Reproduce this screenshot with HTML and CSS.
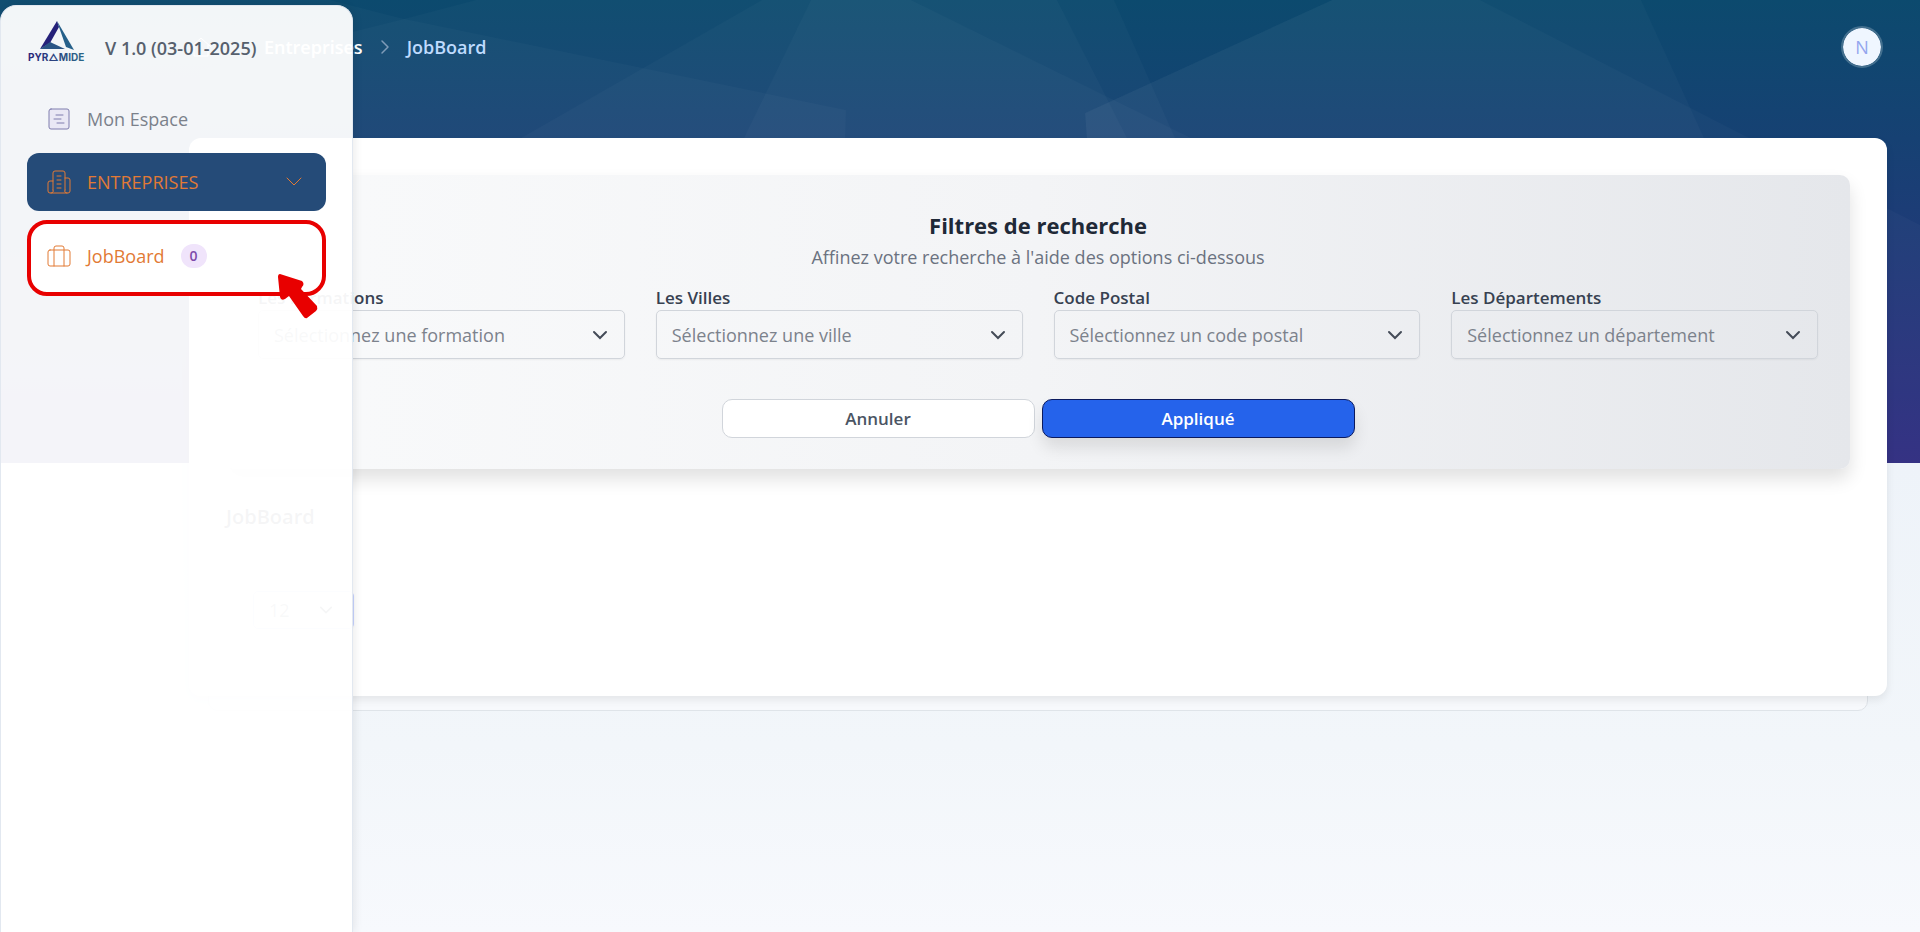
FILE: index.html
```html
<!DOCTYPE html>
<html lang="fr">
<head>
    <meta charset="UTF-8">
    <meta name="viewport" content="width=device-width, initial-scale=1.0">
    <title>Pyramide - JobBoard</title>
    <link rel="stylesheet" href="styles.css">
</head>
<body>
    <svg class="backdrop" viewBox="0 0 1920 463" preserveAspectRatio="none" aria-hidden="true">
        <defs>
            <linearGradient id="sky" x1="0" y1="0" x2="0" y2="1">
                <stop offset="0" stop-color="#0c4a6e"/>
                <stop offset=".3" stop-color="#164173"/>
                <stop offset="1" stop-color="#312e81"/>
            </linearGradient>
        </defs>
        <rect width="1920" height="463" fill="url(#sky)"/>
        <g fill="#fff" fill-opacity=".025">
            <path d="M0 0H330L400 18L846 110L836 463H0Z"/>
            <path d="M762 0L521 138L300 463H1700L1191 138L911 0Z"/>
            <path d="M811 0L744 138L700 463H1300L1127 138L1057 0Z"/>
            <path d="M476 0L400 20L200 70V463H1300L1175 138L1114 0Z"/>
            <path d="M1332 0L1085 113L1110 463H1850L1704 138L1641 0Z"/>
            <path d="M1332 0L1085 113L1110 463H1920V225L1755 141L1480 0Z"/>
        </g>
    </svg>

    <div class="page">
        <header class="topbar">
            <nav class="breadcrumb" aria-label="Fil d'Ariane">
                <a class="home" href="#" aria-label="Accueil">
                    <svg viewBox="0 0 24 24"><path d="m2 12 10-9 10 9M5 10v11h14V10"/></svg>
                </a>
                <a class="crumb" href="#">Entreprises</a>
                <svg class="crumb-sep" viewBox="0 0 24 24"><path d="m8 4 8 8-8 8"/></svg>
                <a class="crumb current" href="#">JobBoard</a>
            </nav>
            <button class="avatar">N</button>
        </header>

        <div class="stack">
            <main class="card">
                <form class="filters">
                    <h2>Filtres de recherche</h2>
                    <p>Affinez votre recherche à l'aide des options ci-dessous</p>
                    <div class="fields">
                        <div class="field">
                            <label for="formation">Les Formations</label>
                            <select id="formation"><option>Sélectionnez une formation</option></select>
                        </div>
                        <div class="field">
                            <label for="ville">Les Villes</label>
                            <select id="ville"><option>Sélectionnez une ville</option></select>
                        </div>
                        <div class="field">
                            <label for="postal">Code Postal</label>
                            <select id="postal"><option>Sélectionnez un code postal</option></select>
                        </div>
                        <div class="field">
                            <label for="departement">Les Départements</label>
                            <select id="departement"><option>Sélectionnez un département</option></select>
                        </div>
                    </div>
                    <div class="actions">
                        <button class="btn" type="reset">Annuler</button>
                        <button class="btn primary" type="button">Appliqué</button>
                    </div>
                </form>
                <h3>JobBoard</h3>
                <select class="page-size" aria-label="Résultats par page"><option>12</option></select>
            </main>
        </div>
    </div>

    <aside class="sidebar">
        <div class="brand">
            <svg class="logo" viewBox="0 0 60 44" role="img" aria-label="Pyramide">
                <defs>
                    <linearGradient id="brand" x1="0" y1="0" x2="1" y2="0">
                        <stop offset="0" stop-color="#2a2478"/>
                        <stop offset="1" stop-color="#2b6788"/>
                    </linearGradient>
                </defs>
                <path fill="#25217a" d="M30 1L13 29L23 23L32 7Z"/>
                <path fill="#2a5585" d="M13 29L23 22L38 29Z"/>
                <path fill="#25608a" d="M30 1L47 30L39 27L32 7Z"/>
                <text x="1" y="41" fill="url(#brand)">PYR△MIDE</text>
            </svg>
            <span class="version">V 1.0 (03-01-2025)</span>
        </div>
        <nav class="menu">
            <a class="item" href="#">
                <svg class="icon violet" viewBox="0 0 24 24"><rect x="2" y="2" width="20" height="20" rx="2"/><path d="M9 8h7M7 12h7M10 16h7"/></svg>
                Mon Espace
            </a>
            <button class="item group" aria-expanded="true">
                <svg class="icon" viewBox="0 0 24 24"><path d="M6 20V3a2 2 0 0 1 2-2h8a2 2 0 0 1 2 2v17M6 11H3a2 2 0 0 0-2 2v8a2 2 0 0 0 2 2h18a2 2 0 0 0 2-2V10a2 2 0 0 0-2-2h-3M10 6h4M10 10h4M10 14h4M10 18h4M6 20a2 2 0 0 1-2 3M18 20a2 2 0 0 0 2 3"/></svg>
                ENTREPRISES
                <svg class="chevron" viewBox="0 0 16 16"><path d="m1 4 7 7 7-7"/></svg>
            </button>
            <a class="item active" href="#">
                <svg class="icon" viewBox="0 0 24 24"><rect x="1" y="6" width="22" height="16" rx="2"/><path d="M7 22V4a2 2 0 0 1 2-2h6a2 2 0 0 1 2 2v18"/></svg>
                JobBoard
                <span class="count">0</span>
                <svg class="pointer" viewBox="0 0 44 48" aria-hidden="true"><path d="M4 2L26 9Q29 12 26 15L25 17L41 34Q42 37 40 39L31 46Q29 47 27 44L13 24L9 27Q5 29 4 25L2 5Q2 2 4 2Z"/></svg>
            </a>
        </nav>
    </aside>
</body>
</html>
```
FILE: styles.css
```css
:root {
    --navy: #254b78;
    --orange: #e27a35;
    --red: #e80000;
    --text: #374151;
    --border: #d1d5db;
}

* {
    box-sizing: border-box;
}

body {
    margin: 0;
    min-height: 100vh;
    font-family: "Open Sans", "Noto Sans", sans-serif;
    font-size: 18px;
    line-height: 24px;
    color: var(--text);
    background: linear-gradient(#eef3f9 50%, #f2f6fa 80%, #f7f9fd);
    overflow-x: hidden;
}

button,
select {
    font: inherit;
}

a {
    color: inherit;
    text-decoration: none;
}

svg {
    fill: none;
    stroke: currentColor;
    stroke-linecap: round;
    stroke-linejoin: round;
}

.backdrop {
    position: absolute;
    top: 0;
    left: 0;
    width: 100%;
    height: 463px;
    stroke: none;
}

.page {
    position: relative;
    padding: 0 33px 32px 189px;
}

.topbar {
    display: flex;
    justify-content: space-between;
    align-items: center;
    height: 93px;
    margin-bottom: 45px;
    padding-right: 4px;
}

.breadcrumb {
    display: flex;
    align-items: center;
    gap: 13px;
    font-weight: 600;
    color: #fff;
}

.home {
    display: flex;
    width: 62px;
}

.home svg {
    width: 24px;
    height: 24px;
}

.crumb-sep {
    width: 18px;
    height: 18px;
    color: #7f9bb8;
    stroke-width: 2;
}

.current {
    color: #bfdbfe;
}

.avatar {
    width: 42px;
    height: 42px;
    padding: 0;
    border: 2px solid #44708f;
    border-radius: 50%;
    background: #eff6ff;
    background-clip: padding-box;
    color: #93a5ee;
}

/* second sheet peeking out under the card */
.stack {
    position: relative;
}

.stack::before {
    content: "";
    position: absolute;
    inset: 20px 19px -15px;
    border: 1px solid #dfe4e9;
    border-radius: 10px;
    background: #f7f9fc;
}

.card {
    position: relative;
    min-height: 558px;
    padding: 37px;
    border-radius: 12px;
    background: #fff;
    box-shadow: 0 4px 8px rgba(0, 0, 0, 0.08);
}

.filters {
    padding: 35px 32px 31px;
    border-radius: 10px;
    background: linear-gradient(90deg, #f9fafb, #f3f4f6 50%, #e5e7eb);
    box-shadow: 0 10px 18px rgba(0, 0, 0, 0.12);
}

.filters h2 {
    margin: 0;
    font-size: 22px;
    line-height: 30px;
    text-align: center;
    color: #1f2937;
}

.filters p {
    margin: 5px 0 17px;
    text-align: center;
    color: #6b7280;
}

.fields {
    display: grid;
    grid-template-columns: repeat(4, 1fr);
    gap: 31px;
}

.field {
    display: flex;
    flex-direction: column;
}

.field label {
    font-weight: 600;
    font-size: 17px;
}

select {
    appearance: none;
    height: 49px;
    padding: 0 15px;
    border: 1px solid var(--border);
    border-radius: 5px;
    color: #7c828c;
    background: url("data:image/svg+xml,%3Csvg xmlns='http://www.w3.org/2000/svg' viewBox='0 0 16 16' fill='none' stroke='%23444b57' stroke-width='2' stroke-linecap='round'%3E%3Cpath d='m2 5 6 6 6-6'/%3E%3C/svg%3E") no-repeat right 16px center / 16px;
    box-shadow: 0 1px 2px rgba(0, 0, 0, 0.05);
}

.actions {
    display: flex;
    justify-content: center;
    gap: 7px;
    margin-top: 40px;
}

.btn {
    width: 313px;
    height: 39px;
    border: 1px solid var(--border);
    border-radius: 10px;
    background: #fff;
    color: #4b5563;
    font-size: 17px;
    font-weight: 600;
}

.primary {
    border-color: #0b1a5e;
    background: #2563eb;
    color: #fff;
    box-shadow: 0 10px 16px rgba(0, 0, 0, 0.1);
}

.card h3 {
    margin: 36px 0 62px;
    font-size: 20px;
    font-weight: 600;
}

.page-size {
    display: block;
    width: 101px;
    height: 38px;
    margin-left: 27px;
    border-color: #c7d2fe;
    background-position: right 20px center;
    background-size: 14px;
}

.sidebar {
    position: absolute;
    top: 5px;
    left: 0;
    bottom: 0;
    width: 353px;
    padding: 0 26px;
    border: 1px solid #e2e8f0;
    border-bottom: 0;
    border-radius: 16px 16px 0 0;
    background: rgba(255, 255, 255, 0.95);
    box-shadow: 2px 0 8px rgba(0, 0, 0, 0.08);
}

.brand {
    display: flex;
    align-items: flex-end;
    gap: 18px;
    padding-top: 14px;
}

.logo {
    width: 60px;
    height: 44px;
    stroke: none;
}

.logo text {
    font-family: Inter, sans-serif;
    font-size: 10px;
    font-weight: 700;
}

.version {
    padding-bottom: 4px;
    font-weight: 600;
    color: #56606d;
}

.menu {
    display: flex;
    flex-direction: column;
    margin-top: 26px;
}

.item {
    display: flex;
    align-items: center;
    gap: 16px;
    height: 58px;
    padding: 0 20px;
    border: 0;
    border-radius: 12px;
    color: #7b818b;
}

.icon {
    width: 24px;
    height: 24px;
}

.violet {
    color: #7f7cae;
    fill: #e9e8f5;
}

.group {
    margin: 5px 0 9px;
    background: var(--navy);
    color: var(--orange);
}

.chevron {
    width: 16px;
    height: 16px;
    margin-left: auto;
    margin-right: 4px;
}

.active {
    position: relative;
    height: 76px;
    border: 4px solid var(--red);
    border-radius: 20px;
    padding: 0 16px 4px;
    background: #fff;
    color: var(--orange);
}

.count {
    width: 26px;
    border-radius: 13px;
    background: #f0e4fb;
    color: #7e4bab;
    font-size: 14px;
    font-weight: 600;
    text-align: center;
}

.pointer {
    position: absolute;
    right: 2px;
    bottom: -28px;
    width: 44px;
    height: 48px;
    fill: var(--red);
    stroke: none;
}
```
